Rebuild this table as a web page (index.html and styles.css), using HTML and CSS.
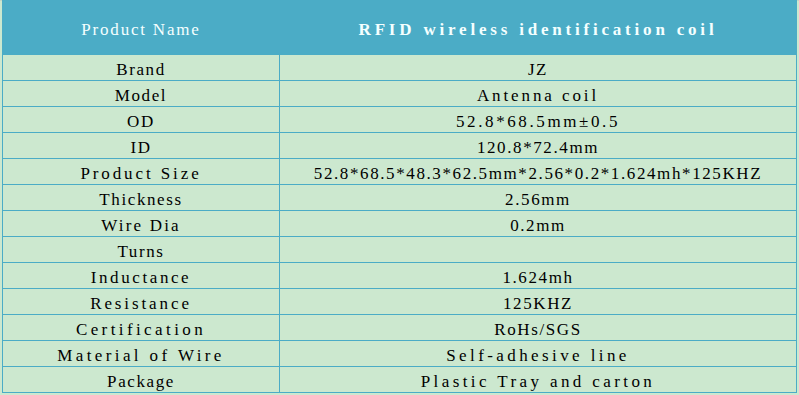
FILE: index.html
```html
<!DOCTYPE html>
<html>
<head>
<meta charset="utf-8">
<link rel="stylesheet" href="styles.css">
</head>
<body>
<div class="sheet">
  <div class="spec">
    <div class="hd hd-key">Product Name</div>
    <div class="hd hd-val">RFID wireless identification coil</div>
    <div class="c">Brand</div><div class="c">JZ</div>
    <div class="c">Model</div><div class="c wide">Antenna coil</div>
    <div class="c">OD</div><div class="c loose">52.8*68.5mm±0.5</div>
    <div class="c">ID</div><div class="c">120.8*72.4mm</div>
    <div class="c wide">Product Size</div><div class="c">52.8*68.5*48.3*62.5mm*2.56*0.2*1.624mh*125KHZ</div>
    <div class="c">Thickness</div><div class="c">2.56mm</div>
    <div class="c mid">Wire Dia</div><div class="c">0.2mm</div>
    <div class="c">Turns</div><div class="c"></div>
    <div class="c loose">Inductance</div><div class="c">1.624mh</div>
    <div class="c wide">Resistance</div><div class="c">125KHZ</div>
    <div class="c wider">Certification</div><div class="c">RoHs/SGS</div>
    <div class="c wider">Material of Wire</div><div class="c wider">Self-adhesive line</div>
    <div class="c">Package</div><div class="c wider">Plastic Tray and carton</div>
  </div>
</div>
</body>
</html>
```
FILE: styles.css
```css
html, body {
  margin: 0;
  padding: 0;
}
body {
  background: #cce8cf;
  width: 799px;
  height: 395px;
  overflow: hidden;
  font-family: "Liberation Serif", "Times New Roman", serif;
}
.sheet {
  border-top: 1px solid #c4d6c6;
  padding-left: 2px;
}
.spec {
  display: grid;
  grid-template-columns: 276px 516px;
  grid-auto-rows: 25px;
  grid-template-rows: 53px;
  gap: 1px;
  padding: 1px;
  width: 793px;
  background: #4bacc6;
  margin-top: -1px;
}
.hd {
  background: #4bacc6;
  color: #f4ffff;
  font-size: 17px;
  letter-spacing: 1.8px;
  display: flex;
  align-items: center;
  justify-content: center;
  padding-top: 5px;
}
.hd-val {
  font-weight: bold;
  letter-spacing: 3.8px;
}
.c {
  background: #cce8cf;
  color: #000;
  font-size: 17px;
  letter-spacing: 1.6px;
  text-align: center;
  line-height: 21px;
  padding-top: 4px;
  white-space: nowrap;
}
.mid {
  letter-spacing: 2.2px;
}
.loose {
  letter-spacing: 2.6px;
}
.wide {
  letter-spacing: 2.9px;
}
.wider {
  letter-spacing: 3.4px;
}
```
